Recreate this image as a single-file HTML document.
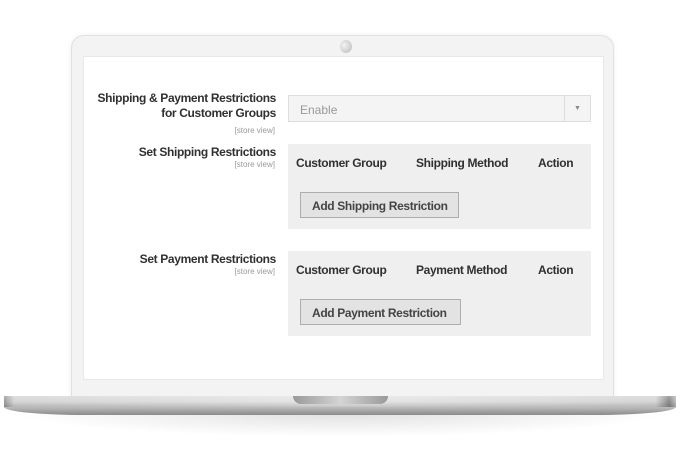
<!DOCTYPE html>
<html><head><meta charset="utf-8"><style>
*{margin:0;padding:0;box-sizing:border-box}
body{width:680px;height:450px;background:#fff;position:relative;overflow:hidden;font-family:"Liberation Sans",sans-serif;color:#333}
.bezel{position:absolute;left:71px;top:35px;width:543px;height:370px;background:#f3f3f3;border:1px solid #e0e0e0;border-radius:13px 13px 0 0;box-shadow:0 0 6px rgba(0,0,0,0.06)}
.cam{position:absolute;left:340px;top:40px;width:12px;height:13px;border-radius:50%;background:radial-gradient(circle at 35% 40%,#f2f2f2,#c4c4c4 80%)}
.screen{position:absolute;left:83px;top:56px;width:521px;height:324px;background:#fff;border:1px solid #e8e8e8}
.base{position:absolute;left:4px;top:396px;width:672px;height:11px;background:linear-gradient(90deg,#9a9a9a,#d6d6d6 1.5%,#e6e6e6 50%,#d6d6d6 97%,#8a8a8a 99%,#c0c0c0);}
.base::after{content:"";position:absolute;left:0;right:0;top:0;bottom:0;background:linear-gradient(rgba(255,255,255,0.2),rgba(255,255,255,0) 50%,rgba(0,0,0,0.15))}
.base2{position:absolute;left:4px;top:407px;width:672px;height:8px;background:linear-gradient(#bdbdbd,#8a8a8a);border-radius:0 0 80px 80px/0 0 8px 8px}
.shadow{position:absolute;left:10px;top:413px;width:660px;height:24px;background:radial-gradient(ellipse at 50% 0,rgba(0,0,0,0.12),rgba(0,0,0,0) 70%)}
.notch{position:absolute;left:293px;top:396px;width:95px;height:8px;background:linear-gradient(90deg,#999,#d4d4d4 50%,#999);border-radius:0 0 8px 8px}
.lbl{position:absolute;right:404px;text-align:right;font-size:12px;font-weight:bold;color:#303030;line-height:15px;letter-spacing:-0.35px;white-space:nowrap}
.sv{position:absolute;right:405px;font-size:8px;color:#999;text-align:right}
.sel{position:absolute;left:288px;top:95px;width:303px;height:27px;border:1px solid #ddd;background:#f4f4f4;font-size:12px;color:#999;padding:7px 0 0 11px}
.sel .ar{position:absolute;right:0;top:0;width:26px;height:25px;border-left:1px solid #ddd;font-size:7px;color:#888;text-align:center;line-height:25px}
.panel{position:absolute;left:288px;width:303px;height:85px;background:#efefef}
.panel span{position:absolute;top:12px;font-size:12px;font-weight:bold;color:#303030;letter-spacing:-0.35px;white-space:nowrap}
.btn{position:absolute;left:12px;top:48px;height:26px;border:1px solid #adadad;background:#e3e3e3;font-size:12px;font-weight:bold;color:#444;padding:6px 0 0 11px;white-space:nowrap;letter-spacing:-0.35px}
</style></head><body>
<div class="bezel"></div>
<div class="cam"></div>
<div class="screen"></div>
<div class="shadow"></div>
<div class="base"></div>
<div class="base2"></div>
<div class="notch"></div>

<div class="lbl" style="top:91px">Shipping &amp; Payment Restrictions<br>for Customer Groups</div>
<div class="sv" style="top:126px">[store view]</div>
<div class="sel">Enable<div class="ar">▼</div></div>

<div class="lbl" style="top:145px">Set Shipping Restrictions</div>
<div class="sv" style="top:160px">[store view]</div>
<div class="panel" style="top:144px">
<span style="left:8px">Customer Group</span><span style="left:128px">Shipping Method</span><span style="left:250px">Action</span>
<div class="btn" style="width:159px">Add Shipping Restriction</div></div>

<div class="lbl" style="top:252px">Set Payment Restrictions</div>
<div class="sv" style="top:267px">[store view]</div>
<div class="panel" style="top:251px">
<span style="left:8px">Customer Group</span><span style="left:128px">Payment Method</span><span style="left:250px">Action</span>
<div class="btn" style="width:161px">Add Payment Restriction</div></div>
</body></html>
